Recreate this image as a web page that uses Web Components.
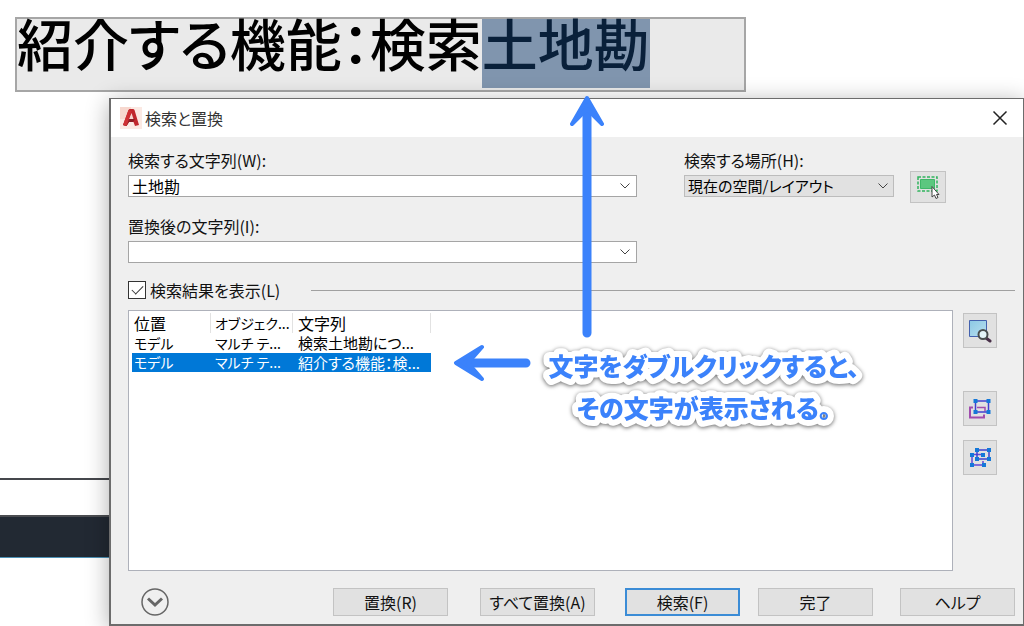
<!DOCTYPE html>
<html lang="ja">
<head>
<meta charset="utf-8">
<meta name="viewport" content="width=device-width, initial-scale=1">
<title>検索と置換</title>
<style>
  html, body { margin: 0; height: 100%; }
  body {
    font: 16px/20px "Noto Sans CJK JP", sans-serif;
    font-feature-settings: "palt";
    color: #111;
    background: #fff;
    overflow: hidden;
  }
</style>
</head>
<body>
<cad-desktop>
  <text-editor slot="editor" lead="紹介する機能&#xFF1A;検索" selected="土地勘"></text-editor>
  <find-dialog slot="dialog"></find-dialog>
  <call-out slot="note"></call-out>
</cad-desktop>

<script>
const define = (name, html, setup) => {
  const template = document.createElement('template');
  template.innerHTML = html;
  customElements.define(name, class extends HTMLElement {
    constructor() {
      super();
      this.attachShadow({ mode: 'open' }).append(template.content.cloneNode(true));
    }
    connectedCallback() { if (setup) setup(this, this.shadowRoot); }
  });
};

/* Drawing area with windows laid over it */
define('cad-desktop', `
<style>
  :host { display: block; position: relative; height: 100vh; min-height: 626px; overflow: hidden; background: #fff; }
  .canvas { display: flex; flex-direction: column; height: 100%; box-sizing: border-box; padding-top: 17px; }
  .editor { padding-left: 15px; flex: 0 0 461px; }
  .rule { height: 2px; background: #45474c; }
  .paper { height: 35px; }
  .status { height: 40px; background: #222933; border-top: 2px solid #4b4d51; border-bottom: 1px solid #4c91b5; }
  .dialog { position: absolute; inset: 98px 0 0 109px; }
  .note { position: absolute; inset: 0; pointer-events: none; }
</style>
<div class="canvas">
  <div class="editor"><slot name="editor"></slot></div>
  <div class="rule"></div>
  <div class="paper"></div>
  <div class="status"></div>
</div>
<div class="dialog"><slot name="dialog"></slot></div>
<div class="note"><slot name="note"></slot></div>`);

/* Multiline text being edited, with a selected run */
define('text-editor', `
<style>
  :host { display: block; box-sizing: border-box; width: 731px; height: 75px; border: 2px solid #a6a6a6; background: #eaeaea; }
  p { display: flex; margin: 0; font-size: 56px; line-height: 46px; font-weight: 500; color: #000; white-space: nowrap; }
  .lead { font-feature-settings: normal; }
  .kana { font-feature-settings: "palt"; }
  mark { background: #8095ae; color: #09203a; height: 69px; }
</style>
<p><span class="lead"></span><mark></mark></p>`, (host, root) => {
  const lead = root.querySelector('.lead');
  /* kana are set proportionally; the colon keeps half an em */
  for (const part of host.getAttribute('lead').split(/(\uFF1A)/)) {
    const run = document.createElement('span');
    run.textContent = part;
    if (part === '\uFF1A') run.style.fontFeatureSettings = '"halt"';
    else run.className = 'kana';
    lead.append(run);
  }
  root.querySelector('mark').textContent = host.getAttribute('selected');
});

/* Labelled editable combo box */
define('combo-box', `
<style>
  :host { display: flex; flex-direction: column; gap: 5px; }
  label { line-height: 20px; }
  .box { display: flex; height: 20px; border: 1px solid #a5a5a5; background: #fff; }
  input { flex: 1; min-width: 0; border: 0; outline: 0; padding: 0 3px; background: none; color: #000; font: inherit; font-feature-settings: inherit; }
  button { width: 22px; padding: 0; border: 0; background: none; display: grid; place-items: center; }
</style>
<label for="field"></label>
<div class="box">
  <input id="field" type="text">
  <button type="button" aria-label="一覧を開く">
    <svg width="12" height="8" viewBox="0 0 12 8" fill="none" stroke="#444"><path d="M1.5 1.5 6 6l4.500-4.500"/></svg>
  </button>
</div>`, (host, root) => {
  root.querySelector('label').textContent = host.getAttribute('label');
  root.querySelector('input').value = host.getAttribute('value') || '';
});

/* Labelled drop-down list */
define('drop-down', `
<style>
  :host { display: flex; flex-direction: column; gap: 5px; }
  label { line-height: 20px; }
  .box { display: grid; align-items: center; }
  select { grid-area: 1 / 1; appearance: none; width: 100%; height: 22px; margin: 0; padding: 0 24px 0 3px; border: 1px solid #bcbcbc; border-radius: 0; background: #e1e1e1; color: #000; font: inherit; font-size: 15px; line-height: 20px; font-feature-settings: inherit; }
  svg { grid-area: 1 / 1; justify-self: end; margin-right: 5px; pointer-events: none; }
</style>
<label for="list"></label>
<div class="box">
  <select id="list"><option></option></select>
  <svg width="12" height="8" viewBox="0 0 12 8" fill="none" stroke="#444"><path d="M1.500 1.500 6 6l4.500-4.500"/></svg>
</div>`, (host, root) => {
  root.querySelector('label').textContent = host.getAttribute('label');
  root.querySelector('option').textContent = host.getAttribute('value');
});

define('push-button', `
<style>
  :host { display: block; }
  button { width: 100%; height: 28px; padding: 0; border: 1px solid #c3c3c3; background: #e1e1e1; color: #111; font: inherit; line-height: 20px; font-feature-settings: inherit; }
  :host([primary]) button { border: 2px solid #3b8cd6; }
</style>
<button type="button"><slot></slot></button>`);

define('icon-button', `
<style>
  :host { display: block; width: 34px; height: 35px; }
  button { width: 100%; height: 100%; padding: 0; border: 1px solid #c3c3c3; background: #e1e1e1; display: grid; place-items: center; }
</style>
<button type="button"><slot></slot></button>`, (host, root) => {
  root.querySelector('button').setAttribute('aria-label', host.getAttribute('label'));
});

/* Search result list */
define('result-list', `
<style>
  :host { display: block; box-sizing: border-box; background: #fff; border: 1px solid #aeb1ba; padding: 2px 3px; }
  table { border-collapse: collapse; table-layout: fixed; width: 299px; }
  .place { width: 79px; } .type { width: 82px; } .string { width: 138px; }
  th, td { padding: 0 0 0 4px; font-weight: 400; text-align: left; white-space: nowrap; color: #000; }
  tr > :first-child { padding-left: 2px; }
  tr > :last-child { padding-left: 5px; }
  th { line-height: 20px; box-shadow: inset -1px 0 #e2e2e2; }
  td { line-height: 20px; font-size: 15px; }
  th.kana, td.kana { font-size: 14px; }
  .selected td { background: #0078d7; color: #fff; line-height: 19px; }
</style>
<table>
  <colgroup><col class="place"><col class="type"><col class="string"></colgroup>
  <thead><tr><th>位置</th><th class="kana">オブジェク...</th><th>文字列</th></tr></thead>
  <tbody>
    <tr><td class="kana">モデル</td><td class="kana">マルチ テ...</td><td>検索土地勘につ...</td></tr>
    <tr class="selected"><td class="kana">モデル</td><td class="kana">マルチ テ...</td><td>紹介する機能&#xFF1A;検...</td></tr>
  </tbody>
</table>`);

define('find-dialog', `
<style>
  :host { display: flex; flex-direction: column; box-sizing: border-box; height: 100%; border: 2px solid #6c6c6c; border-width: 1px 1px 2px 2px; background: #efefef; box-shadow: 0 4px 22px rgba(0,0,0,.32); }
  header { display: flex; align-items: center; gap: 3px; height: 38px; padding: 0 14px 0 9px; background: #fff; }
  h1 { flex: 1; margin: 0; font-size: 16px; font-weight: 400; line-height: 20px; color: #333; }
  header button { width: 18px; height: 18px; padding: 0; border: 0; background: none; display: grid; place-items: center; }
  main { flex: 1; display: flex; flex-direction: column; padding: 13px 8px 8px 17px; }
  .search { display: flex; flex-direction: column; gap: 19px; }
  .fields { display: grid; grid-template-columns: minmax(0, 509fr) minmax(0, 331fr); column-gap: 47px; }
  .where { display: flex; gap: 16px; align-items: flex-start; padding-right: 69px; }
  .where drop-down { flex: 1; }
  .where icon-button { width: 36px; height: 32px; margin-top: 21px; }
  .toggle { display: flex; align-items: center; gap: 31px; margin-top: 16px; height: 22px; }
  .toggle label { display: flex; align-items: center; gap: 4px; }
  input { appearance: none; display: grid; place-items: center; box-sizing: border-box; width: 18px; height: 18px; margin: 0; border: 1px solid #333; background: #fff; }
  input:checked::before { content: ""; width: 10px; height: 5px; border: solid #333; border-width: 0 0 1px 1px; transform: rotate(-45deg) translate(1px, -1px); }
  hr { flex: 1; height: 1px; margin: 0; border: 0; background: #a0a0a0; }
  .results { flex: 1; display: flex; gap: 10px; margin-top: 9px; }
  result-list { flex: 1; }
  .tools { display: flex; flex-direction: column; padding: 3px 18px 0 0; gap: 14px; }
  .tools icon-button:first-child { margin-bottom: 29px; }
  footer { display: flex; align-items: center; padding: 17px 0 0 13px; }
  .more { width: 28px; height: 28px; padding: 0; border: 0; background: none; margin-right: auto; }
  .actions { flex: 0 1 682px; display: grid; grid-template-columns: 147fr 145fr 133fr 142fr 115fr; }
  .actions push-button { width: 115px; }
  svg { display: block; }
</style>
<header>
  <svg width="22" height="22" viewBox="0 0 22 22" aria-hidden="true">
    <path d="M0 0h22v22H0z" fill="#fbe9e3"/><path d="M0 0h11v12H0z" fill="#f7d8cf"/>
    <path d="M3 18 8.500 3Q9 2 10 2h3q1 0 1.500 1L19 18l-4 1-1.500-4H9l-2.500 4z" fill="#c0272d"/>
    <path d="m3 18 4-7 2 1 4-1 2 1-2 3H9l-2.500 4z" fill="#8e1d25"/>
    <path d="m9 12 2.500-6 2 6z" fill="#f6d8d2"/>
    <path d="M3 18 8.500 3l3 1L8 15l-1.500 4z" fill="#cf3034"/>
  </svg>
  <h1>検索と置換</h1>
  <button type="button" aria-label="閉じる">
    <svg width="16" height="16" viewBox="0 0 16 16" stroke="#222" stroke-width="1.500"><path d="m1.500 1.500 13 13m0-13-13 13"/></svg>
  </button>
</header>
<main>
  <div class="fields">
    <div class="search">
      <combo-box label="検索する文字列(W):" value="土地勘"></combo-box>
      <combo-box label="置換後の文字列(I):"></combo-box>
    </div>
    <div class="where">
      <drop-down label="検索する場所(H):" value="現在の空間/レイアウト"></drop-down>
      <icon-button label="オブジェクトを選択">
        <svg width="24" height="24" viewBox="0 0 24 24">
          <path d="M2 2h19v14H2z" fill="none" stroke="#31b45d" stroke-width="1.500" stroke-dasharray="3 1.500"/>
          <path d="M4.500 4.500h14v9h-14z" fill="#5cc77f" stroke="#3fb768"/>
          <path d="M16 11.500v10.500l2.500-2 1.500 3.500 2-1-1.500-3H23z" fill="#fff" stroke="#444"/>
        </svg>
      </icon-button>
    </div>
  </div>
  <div class="toggle">
    <label for="show"><input id="show" type="checkbox" checked>検索結果を表示(L)</label>
    <hr>
  </div>
  <div class="results">
    <result-list></result-list>
    <div class="tools">
      <icon-button label="結果にズーム">
        <svg width="24" height="24" viewBox="0 0 24 24">
          <defs><linearGradient id="sky" x2="1" y2="1"><stop stop-color="#8cc8e4"/><stop offset="1" stop-color="#b7dff0"/></linearGradient></defs>
          <path d="M1.500 1.500h17v16h-17z" fill="url(#sky)" stroke="#4361ae"/>
          <path d="m18 19 4 3" stroke="#493049" stroke-width="3" stroke-linecap="round"/>
          <circle cx="15" cy="15.500" r="4.500" fill="#e4f4f8" stroke="#494e4e" stroke-width="2"/>
        </svg>
      </icon-button>
      <icon-button label="選択セットを作成">
        <svg width="24" height="24" viewBox="0 0 24 24" fill="none">
          <path d="M5 10.500H2v10h14v-3" stroke="#a04cae" stroke-width="2"/>
          <path d="M9 10.500h8v4" stroke="#a04cae" stroke-width="1.500"/>
          <path d="M7.500 4h13v11h-13z" stroke="#4040d0" stroke-width="1.500"/>
          <path d="M5.500 2h4v4h-4zm13 0h4v4h-4zm-13 11h4v4h-4zm13 0h4v4h-4z" fill="#1478d8"/>
        </svg>
      </icon-button>
      <icon-button label="すべてを選択セットに追加">
        <svg width="24" height="24" viewBox="0 0 24 24" fill="none">
          <path d="M4 8.500h10m-10 0V19h11v-4" stroke="#6047d8" stroke-width="1.500"/>
          <path d="M9 4h12v9H9z" stroke="#4040d0" stroke-width="1.500"/>
          <path d="M7 2h4v4H7zm12 0h4v4h-4zM7 11h4v4H7zm12 0h4v4h-4zM2 7h4v4H2zm11 0h4v4h-4zM2 17h4v4H2zm12 0h4v4h-4z" fill="#1478d8"/>
        </svg>
      </icon-button>
    </div>
  </div>
  <footer>
    <button class="more" type="button" aria-label="詳細オプション">
      <svg width="28" height="28" viewBox="0 0 28 28" fill="none" stroke="#666"><circle cx="14" cy="14" r="13" stroke-width="1.500"/><path d="m7 10.500 7 6.500 7-6.500" stroke-width="3"/></svg>
    </button>
    <div class="actions">
      <push-button>置換(R)</push-button>
      <push-button>すべて置換(A)</push-button>
      <push-button primary>検索(F)</push-button>
      <push-button>完了</push-button>
      <push-button>ヘルプ</push-button>
    </div>
  </footer>
</main>`);

/* Explanatory arrows and caption floating above the windows */
define('call-out', `
<style>
  :host { display: block; }
  svg { display: block; }
  .caption { font-size: 25px; font-weight: 900; text-anchor: middle; fill: #3b82fb; stroke: #fff; stroke-width: 12px; stroke-linejoin: round; paint-order: stroke; filter: drop-shadow(0 1px 2px rgba(0,0,0,.6)); }
</style>
<svg width="900" height="450" fill="none">
  <g stroke="#3b82fb" stroke-linecap="round" stroke-linejoin="round">
    <path d="M587 105v228M462 363h64" stroke-width="9"/>
    <path d="M572 124 587 98l15 26-15-15zM482 347l-26 16 26 16-14-16z" stroke-width="4" fill="#3b82fb"/>
  </g>
  <g class="caption">
    <text x="704" y="376">文字をダブルクリックすると、</text>
    <text x="704" y="418">その文字が表示される。</text>
  </g>
</svg>`);
</script>
</body>
</html>
